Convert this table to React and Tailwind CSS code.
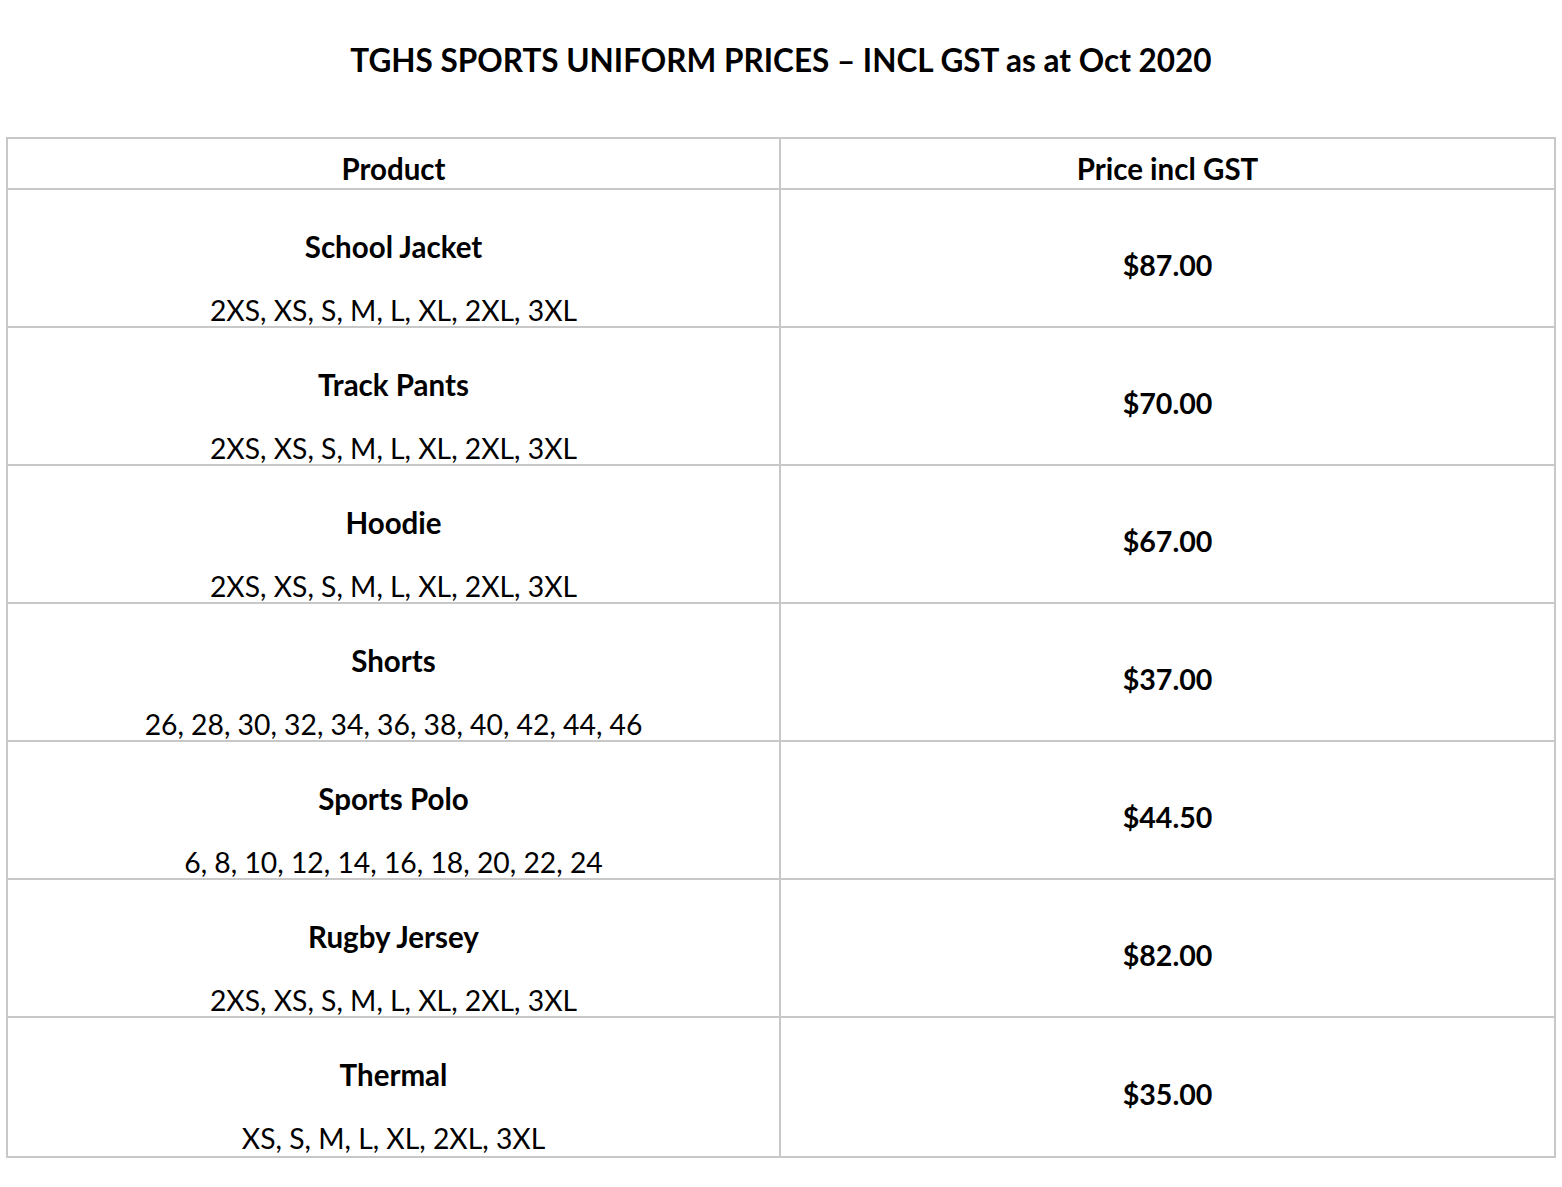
import React from "react";

const rows = [
  ["School Jacket", "2XS, XS, S, M, L, XL, 2XL, 3XL", "$87.00"],
  ["Track Pants", "2XS, XS, S, M, L, XL, 2XL, 3XL", "$70.00"],
  ["Hoodie", "2XS, XS, S, M, L, XL, 2XL, 3XL", "$67.00"],
  ["Shorts", "26, 28, 30, 32, 34, 36, 38, 40, 42, 44, 46", "$37.00"],
  ["Sports Polo", "6, 8, 10, 12, 14, 16, 18, 20, 22, 24", "$44.50"],
  ["Rugby Jersey", "2XS, XS, S, M, L, XL, 2XL, 3XL", "$82.00"],
  ["Thermal", "XS, S, M, L, XL, 2XL, 3XL", "$35.00"],
];

export default function App() {
  return (
    <div className="w-[1562px] h-[1187px] bg-white text-black font-['Lato',sans-serif]">
      <div className="h-[137px] pt-[40px] text-center text-[31.5px] font-bold leading-[40px]">
        TGHS SPORTS UNIFORM PRICES – INCL GST as at Oct 2020
      </div>
      <div className="ml-[6px] w-[1550px] border-2 border-[#c8c8c8]">
        <div className="flex h-[51px] border-b-2 border-[#c8c8c8] text-[29.5px] font-bold leading-[40px]">
          <div className="w-[773px] border-r-2 border-[#c8c8c8] flex justify-center pt-[10px]">Product</div>
          <div className="flex-1 flex justify-center pt-[10px]">Price incl GST</div>
        </div>
        {rows.map(([name, sizes, price], i) => (
          <div key={name} className={`flex h-[138px] ${i < rows.length - 1 ? "border-b-2 border-[#c8c8c8]" : ""}`}>
            <div className="w-[773px] border-r-2 border-[#c8c8c8] flex flex-col items-center pt-[37px] leading-[40px]">
              <div className="font-bold text-[29.5px]">{name}</div>
              <div className="mt-[23px] text-[28.3px]">{sizes}</div>
            </div>
            <div className="flex-1 flex items-center justify-center pt-[14px] font-bold text-[28.6px] leading-[40px]">{price}</div>
          </div>
        ))}
      </div>
    </div>
  );
}
